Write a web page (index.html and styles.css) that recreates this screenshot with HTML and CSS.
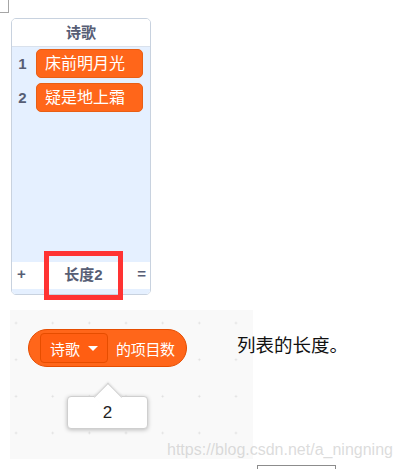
FILE: index.html
```html
<!DOCTYPE html>
<html>
	<head>
		<meta charset="utf-8">
		<title>列表的长度</title>
		<link rel="stylesheet" href="styles.css">
	</head>
	<body>

		<div class="corner"></div>

		<div class="monitor-wrap">
			<div class="monitor">
				<div class="monitor-header">诗歌</div>
				<div class="monitor-list">
					<div class="monitor-row">
						<span class="monitor-index">1</span>
						<span class="monitor-value">床前明月光</span>
					</div>
					<div class="monitor-row">
						<span class="monitor-index">2</span>
						<span class="monitor-value">疑是地上霜</span>
					</div>
				</div>
				<div class="monitor-footer">
					<span class="monitor-add">+</span>
					<span class="monitor-length">长度2</span>
					<span class="monitor-resize">=</span>
				</div>
			</div>
			<div class="highlight"></div>
		</div>

		<div class="example-row">
			<div class="workspace">
				<div class="block">
					<div class="block-dropdown">
						诗歌
						<span class="block-arrow"></span>
					</div>
					<span class="block-label">的项目数</span>
				</div>
				<div class="report"><span class="report-value">2</span></div>
			</div>
			<p class="description">列表的长度。</p>
		</div>

		<div class="next-box"></div>

		<div class="watermark">https://blog.csdn.net/a_ningning</div>

	</body>
</html>
```

FILE: styles.css
```css
* {
	box-sizing:				border-box;
}

html,
body {
	background:				#ffffff;
	height:					469px;
	overflow:				hidden;
}

body {
	margin:					0;
	padding:				0;
	position:				relative;
	font-family:			"Liberation Sans", "Noto Sans CJK SC", sans-serif;
}

.corner {
	width:					9px;
	height:					13px;
	border-right:			1px solid #a6a6a6;
	border-bottom:			1px solid #a6a6a6;
}

/* list monitor */

.monitor-wrap {
	position:				relative;
	margin:					5px 0 0 11px;
	width:					140px;
}

.monitor {
	width:					140px;
	border:					1px solid #c8d2df;
	border-radius:			5px;
	overflow:				hidden;
	color:					#575e75;
	font-weight:			bold;
}

.monitor-header {
	height:					28px;
	line-height:			27px;
	text-align:				center;
	font-size:				15px;
	background:				#ffffff;
	border-bottom:			1px solid #d9e1ec;
}

.monitor-list {
	height:					215px;
	padding-top:			2px;
	background:				#e5f0ff;
	display:				flex;
	flex-direction:			column;
	gap:					5px;
}

.monitor-row {
	display:				flex;
	align-items:			center;
}

.monitor-index {
	width:					21px;
	text-align:				center;
	font-size:				15px;
	margin-right:			3px;
}

.monitor-value {
	width:					107px;
	height:					29px;
	line-height:			27px;
	padding-left:			8px;
	background:				#ff661a;
	border:					1px solid #e85f15;
	border-radius:			5px;
	color:					#ffffff;
	font-weight:			normal;
	font-size:				16px;
}

.monitor-footer {
	height:					32px;
	padding:				0 4px 5px 5px;
	display:				flex;
	justify-content:		space-between;
	align-items:			center;
	font-size:				15px;
	background:				#ffffff;
	border-bottom:			5px solid #e5f0ff;
}

.monitor-length {
	margin-left:			4px;
}

.highlight {
	position:				absolute;
	left:					33px;
	top:					233px;
	width:					79px;
	height:					49px;
	border:					5px solid #ff3333;
}

/* block example */

.example-row {
	display:				flex;
	align-items:			flex-start;
	margin-top:				15px;
}

.workspace {
	flex:					none;
	width:					243px;
	height:					149px;
	margin-left:			10px;
	padding:				19px 0 0 18px;
	background-color:		#f9f9f9;
	background-image:		radial-gradient(circle, #dddddd 0.9px, transparent 1.1px);
	background-size:		36.67px 36.67px;
	background-position:	-12.3px -5.3px;
}

.block {
	display:				inline-flex;
	align-items:			center;
	height:					38px;
	padding:				0 11px 0 11px;
	background:				#ff661a;
	border:					1px solid #e64d00;
	border-radius:			19px;
	color:					#ffffff;
	font-size:				15px;
}

.block-dropdown {
	display:				flex;
	align-items:			center;
	height:					30px;
	padding:				0 9px 0 9px;
	margin-right:			8px;
	background:				#ff5e12;
	border:					1px solid #e64d00;
	border-radius:			4px;
}

.block-arrow {
	margin-left:			8px;
	width:					0;
	height:					0;
	border-left:			5px solid transparent;
	border-right:			5px solid transparent;
	border-top:				5px solid #ffffff;
}

.block-label {
	letter-spacing:			-0.3px;
}

.report {
	position:				relative;
	width:					81px;
	height:					33px;
	margin:					29px 0 0 39px;
	background:				#ffffff;
	border:					1px solid #cfcfcf;
	border-radius:			4px;
	box-shadow:				0 1px 4px rgba(0, 0, 0, 0.25);
	text-align:				center;
	line-height:			31px;
	font-size:				17px;
	color:					#222222;
}

.report:before {
	content:				"";
	position:				absolute;
	left:					30px;
	top:					-10px;
	width:					19px;
	height:					19px;
	background:				#ffffff;
	border-top:				1px solid #cfcfcf;
	border-left:			1px solid #cfcfcf;
	transform:				rotate(45deg);
	box-shadow:				-1px -1px 2px rgba(0, 0, 0, 0.08);
}

.report-value {
	position:				relative;
	z-index:				1;
}

.description {
	margin:					23px 0 0 -16px;
	font-family:			"Noto Sans CJK SC", serif;
	font-size:				18.5px;
	line-height:			22px;
	color:					#111111;
	white-space:			nowrap;
}

.next-box {
	margin:					6px 0 0 257px;
	width:					79px;
	height:					20px;
	border:					1px solid #8c8c8c;
}

.watermark {
	position:				absolute;
	left:					167px;
	top:					441px;
	font-size:				16px;
	line-height:			18px;
	color:					rgba(190, 190, 190, 0.55);
	white-space:			nowrap;
}
```
